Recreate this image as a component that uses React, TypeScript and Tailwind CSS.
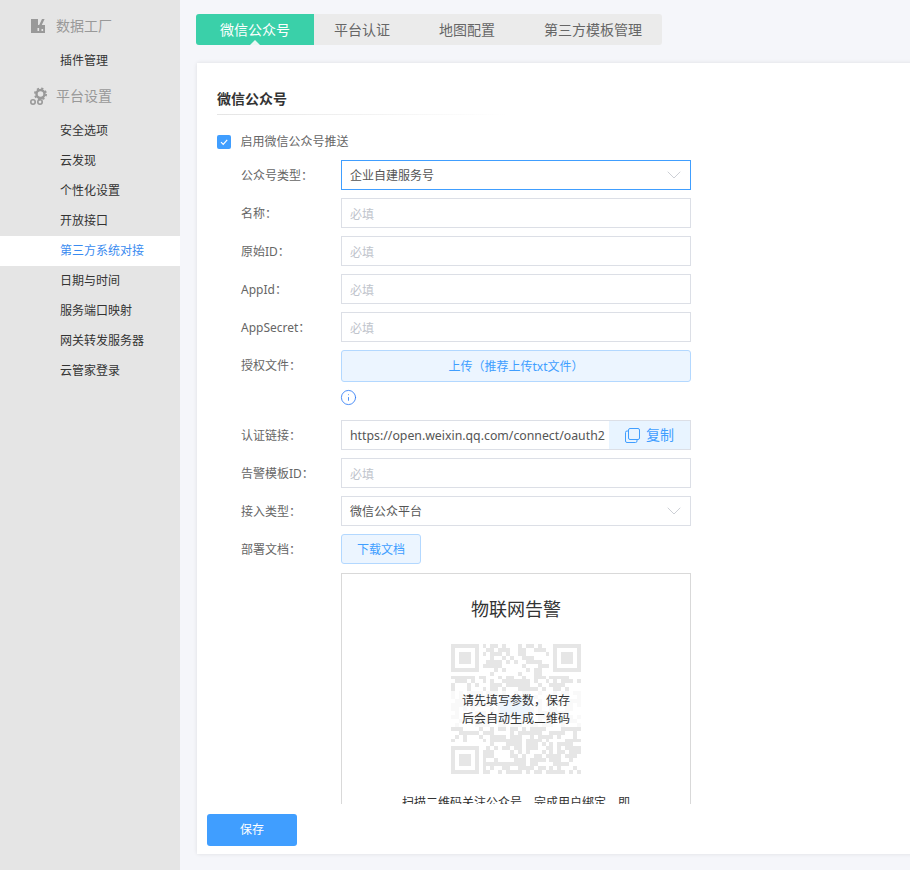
import { ChevronDown, Info } from 'lucide-react';

const sideTop = ['插件管理'];
const sideItems = ['安全选项', '云发现', '个性化设置', '开放接口', '第三方系统对接', '日期与时间', '服务端口映射', '网关转发服务器', '云管家登录'];

const inputCls = 'h-[30px] w-[350px] border border-[#dcdfe6] bg-white px-2 pt-[2px] text-xs text-[#555] outline-none placeholder:text-[#c0c4cc]';

function FactoryIcon() {
  return (
    <svg width="15" height="14" viewBox="0 0 15 14" fill="#999">
      <path d="M0 0h7v6h1.2L11 0h2.6l-2.8 6H14v8H0z" />
      <path d="M6.5 9h1.6v3H6.5zM10.5 10h1.6v2h-1.6z" fill="#e5e5e5" />
    </svg>
  );
}

function GearIcon() {
  return (
    <svg width="17" height="18" viewBox="0 0 17 18" fill="none" stroke="#999">
      <circle cx="10.5" cy="7" r="4" strokeWidth="2.4" />
      <circle cx="10.5" cy="7" r="5.6" strokeWidth="1.8" strokeDasharray="2.2 2.2" />
      <circle cx="3" cy="15" r="2.2" strokeWidth="1.6" />
      <circle cx="10" cy="15" r="2.2" strokeWidth="1.6" />
    </svg>
  );
}

function CopyIcon() {
  return (
    <svg width="15" height="15" viewBox="0 0 15 15" fill="none" stroke="#409eff" strokeWidth="1">
      <rect x="3.5" y="0.5" width="11" height="11" rx="1.5" />
      <path d="M3.5 3H2a1.5 1.5 0 0 0-1.5 1.5V13A1.5 1.5 0 0 0 2 14.5h8.5A1.5 1.5 0 0 0 12 13v-1.5" />
    </svg>
  );
}

function QrCode() {
  const n = 33;
  const cells: { x: number; y: number }[] = [];
  let seed = 97;
  const inFinder = (x: number, y: number) => (x < 8 && y < 8) || (x >= n - 8 && y < 8) || (x < 8 && y >= n - 8);
  for (let y = 0; y < n; y++) {
    for (let x = 0; x < n; x++) {
      seed = (seed * 1103515245 + 12345) & 0x7fffffff;
      if (!inFinder(x, y) && (seed >> 16) % 100 < 56) cells.push({ x, y });
    }
  }
  const finders = [
    [0, 0],
    [n - 7, 0],
    [0, n - 7],
  ];
  return (
    <svg width="130" height="130" viewBox="0 0 33 33" shapeRendering="crispEdges">
      {cells.map((c) => (
        <rect key={`${c.x}-${c.y}`} x={c.x} y={c.y} width="1" height="1" fill="#e6e6e6" />
      ))}
      {finders.map(([x, y]) => (
        <g key={`${x}-${y}`}>
          <path d={`M${x} ${y}h7v7h-7z M${x + 1} ${y + 1}v5h5v-5z`} fill="#e6e6e6" fillRule="evenodd" />
          <rect x={x + 2} y={y + 2} width="3" height="3" fill="#e6e6e6" />
        </g>
      ))}
    </svg>
  );
}

function Row({ label, children }: { label: string; children: React.ReactNode }) {
  return (
    <div className="flex">
      <div className="h-[30px] w-[124px] pl-6 pt-[1px] text-xs leading-[30px] text-[#666]">{label}</div>
      {children}
    </div>
  );
}

export default function App() {
  return (
    <div className="flex h-[870px] w-[910px] overflow-hidden bg-[#f5f6fa] font-['Noto_Sans','Noto_Sans_CJK_SC',sans-serif]">
      <aside className="w-[180px] shrink-0 bg-[#e5e5e5] pt-2">
        <div className="flex h-9 items-center pl-[31px] text-sm text-[#999]">
          <FactoryIcon />
          <span className="ml-[10px]">数据工厂</span>
        </div>
        {sideTop.map((t) => (
          <div key={t} className="mt-[2px] h-[30px] pl-[60px] text-xs leading-[30px] text-[#333]">{t}</div>
        ))}
        <div className="mt-[2px] flex h-9 items-center pl-[30px] text-sm text-[#999]">
          <GearIcon />
          <span className="ml-[9px]">平台设置</span>
        </div>
        <div className="mt-[2px]">
          {sideItems.map((t) => (
            <div
              key={t}
              className={t === '第三方系统对接'
                ? 'h-[30px] bg-white pl-[60px] text-xs leading-[30px] text-[#3a8bf0]'
                : 'h-[30px] pl-[60px] text-xs leading-[30px] text-[#333]'}
            >
              {t}
            </div>
          ))}
        </div>
      </aside>

      <main className="min-w-0 flex-1 pl-4 pt-[14px]">
        <div className="flex h-[31px] w-[466px] rounded-[3px] bg-[#ebebeb] text-sm leading-[31px] text-[#666]">
          <div className="relative w-[118px] rounded-l-[3px] bg-[#3ad0a9] text-center text-white">
            微信公众号
            <span className="absolute bottom-0 left-[54px] h-0 w-0 border-x-[5px] border-b-[5px] border-x-transparent border-b-[#ebf7f4]" />
          </div>
          <div className="px-5">平台认证</div>
          <div className="ml-[9px] px-5">地图配置</div>
          <div className="ml-[9px] px-5">第三方模板管理</div>
        </div>

        <div className="ml-[1px] mt-[18px] h-[791px] w-[760px] bg-white shadow-[0_0_4px_rgba(0,0,0,0.1)]">
          <div className="h-[741px] overflow-hidden pl-5 pt-[26px]">
            <h2 className="text-sm font-bold leading-5 text-[#333]">微信公众号</h2>
            <div className="mt-[5px] h-[1px] w-[290px] bg-gradient-to-r from-[#e5e5e5] to-transparent" />
            <div className="mt-[19px] flex items-center">
              <span className="flex h-[14px] w-[14px] items-center justify-center rounded-[2px] bg-[#409eff]">
                <svg width="10" height="10" viewBox="0 0 10 10" fill="none" stroke="#fff" strokeWidth="1.2">
                  <path d="M2 5.2l2.2 2.2L8.2 2.8" />
                </svg>
              </span>
              <span className="ml-[9.5px] text-xs text-[#666]">启用微信公众号推送</span>
            </div>

            <div className="mt-[10px] flex flex-col gap-2">
              <Row label="公众号类型：">
                <div className="flex h-[30px] w-[350px] items-center justify-between border border-[#409eff] pl-2 pr-1 text-xs text-[#555]">
                  <span className="mt-[2px]">企业自建服务号</span>
                  <ChevronDown size={24} strokeWidth={0.8} color="#c0c4cc" />
                </div>
              </Row>
              <Row label="名称：">
                <input className={inputCls} placeholder="必填" />
              </Row>
              <Row label="原始ID：">
                <input className={inputCls} placeholder="必填" />
              </Row>
              <Row label="AppId：">
                <input className={inputCls} placeholder="必填" />
              </Row>
              <Row label="AppSecret：">
                <input className={inputCls} placeholder="必填" />
              </Row>
              <Row label="授权文件：">
                <div>
                  <button className="h-8 w-[350px] rounded-[3px] border border-[#b3d8ff] bg-[#ecf5ff] pt-[2px] text-xs text-[#409eff]">
                    上传（推荐上传txt文件）
                  </button>
                  <div className="mb-[1px] mt-2 flex h-[14px] items-center">
                    <Info size={17} strokeWidth={1.2} color="#2f7cf6" className="-ml-[1px]" />
                  </div>
                </div>
              </Row>
              <div className="mt-[7px]">
                <Row label="认证链接：">
                  <div className="flex h-[30px] w-[350px] border border-[#dcdfe6]">
                    <input
                      readOnly
                      className="w-[267px] pl-2 pr-1 pt-[2px] text-[12.3px] text-[#555] outline-none"
                      value="https://open.weixin.qq.com/connect/oauth2/authorize"
                    />
                    <button className="flex flex-1 items-center justify-center gap-[6px] bg-[#e8f4ff] text-sm text-[#409eff]">
                      <CopyIcon />
                      复制
                    </button>
                  </div>
                </Row>
              </div>
              <Row label="告警模板ID：">
                <input className={inputCls} placeholder="必填" />
              </Row>
              <Row label="接入类型：">
                <div className="flex h-[30px] w-[350px] items-center justify-between border border-[#dcdfe6] pl-2 pr-1 text-xs text-[#555]">
                  <span className="mt-[2px]">微信公众平台</span>
                  <ChevronDown size={24} strokeWidth={0.8} color="#c0c4cc" />
                </div>
              </Row>
              <Row label="部署文档：">
                <button className="h-[30px] w-20 rounded-[3px] border border-[#b3d8ff] bg-[#ecf5ff] pt-[2px] text-xs text-[#409eff]">
                  下载文档
                </button>
              </Row>
            </div>

            <div className="ml-[124px] mt-[9px] h-[300px] w-[350px] border border-[#d9d9d9] pt-[21px]">
              <div className="text-center text-lg leading-7 text-[#333]">物联网告警</div>
              <div className="relative mx-auto mt-[21px] h-[130px] w-[130px]">
                <QrCode />
                <div className="absolute inset-x-0 top-[47px] h-9 bg-white/75" />
                <div className="absolute left-[49px] top-[52px] h-6 w-[30px] bg-[#eef5fd]" />
                <div className="absolute inset-x-0 top-[48px] text-center text-xs leading-[18px] text-[#333]">
                  请先填写参数，保存
                  <br />
                  后会自动生成二维码
                </div>
              </div>
              <div className="mx-auto mt-[19px] w-[230px] text-center text-xs leading-5 text-[#333]">
                扫描二维码关注公众号，完成用户绑定，即可接收告警
              </div>
            </div>
          </div>
          <div className="pl-[10px] pt-[10px]">
            <button className="h-8 w-[90px] rounded-[3px] bg-[#409eff] text-xs text-white">保存</button>
          </div>
        </div>
      </main>
    </div>
  );
}
